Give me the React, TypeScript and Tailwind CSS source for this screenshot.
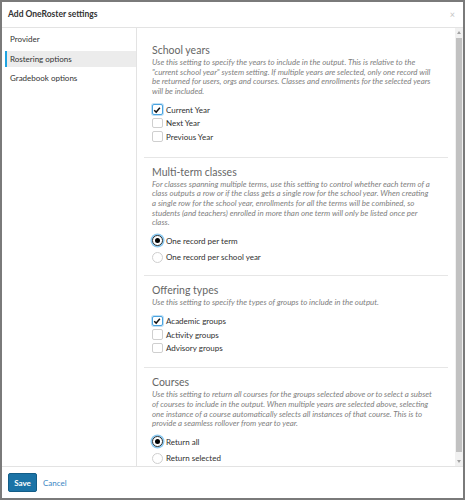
import React from "react";

type Choice = { label: string; on?: boolean };

const Checkbox = ({ on }: { on?: boolean }) => (
  <span
    className={
      on
        ? "flex h-[10.5px] w-[10.5px] items-center justify-center rounded-[2px] border border-[#4aa3df] bg-white shadow-[0_0_0_1px_#bfe0f6]"
        : "h-[10.5px] w-[10.5px] rounded-[2px] border border-[#cfcfcf] bg-white"
    }
  >
    {on && (
      <svg viewBox="0 0 10 10" className="h-[8px] w-[8px]">
        <path d="M1.5 5.2 L4 7.6 L8.6 2.2" fill="none" stroke="#111" strokeWidth="1.8" />
      </svg>
    )}
  </span>
);

const Radio = ({ on }: { on?: boolean }) => (
  <span
    className={
      on
        ? "flex h-[11px] w-[11px] items-center justify-center rounded-full border border-[#333] bg-white shadow-[0_0_0_1.5px_#8cc8ee]"
        : "h-[11px] w-[11px] rounded-full border border-[#cfcfcf] bg-white"
    }
  >
    {on && <span className="h-[5.5px] w-[5.5px] rounded-full bg-black" />}
  </span>
);

// description lines are kept as in the original dialog so wrapping matches
const Section = ({
  title,
  lines,
  children,
  last,
  pb,
}: {
  title: string;
  lines: string[];
  children: React.ReactNode;
  last?: boolean;
  pb: string;
}) => (
  <div className={`pl-[8px] pr-[10px] pt-[6px] ${pb} ${last ? "" : "border-b border-[#e6e6e6]"}`}>
    <h3 className="h-[16px] text-[10.5px] leading-[16px] text-[#666]">{title}</h3>
    <p className="text-[7.9px] italic leading-[9.6px] text-[#808080]">
      {lines.map((l) => (
        <span key={l} className="block whitespace-nowrap">
          {l}
        </span>
      ))}
    </p>
    {children}
  </div>
);

const CheckList = ({ items }: { items: Choice[] }) => (
  <div className="mt-[6.5px] flex flex-col">
    {items.map((c) => (
      <label key={c.label} className="flex h-[13.5px] items-center gap-[3.5px] text-[8px] text-[#2f2f2f]">
        <Checkbox on={c.on} />
        {c.label}
      </label>
    ))}
  </div>
);

const RadioList = ({ items }: { items: Choice[] }) => (
  <div className="mt-[4.5px] flex flex-col">
    {items.map((c) => (
      <label key={c.label} className="flex h-[16.5px] items-center gap-[3px] text-[8px] text-[#2f2f2f]">
        <Radio on={c.on} />
        {c.label}
      </label>
    ))}
  </div>
);

const App = () => {
  const nav = ["Provider", "Rostering options", "Gradebook options"];

  return (
    <div className="flex h-[500px] w-[465px] flex-col border-2 border-[#7a7a7a] bg-white font-['Lato',sans-serif]">
      <div className="flex h-[26px] shrink-0 items-center justify-between border-b border-[#e3e3e3] pl-[6px] pr-[8px]">
        <span className="text-[8.5px] font-bold text-[#333]">Add OneRoster settings</span>
        <span className="text-[9px] text-[#c4c4c4]">×</span>
      </div>

      <div className="flex min-h-0 flex-1">
        <div className="flex w-[135px] shrink-0 flex-col gap-[3.5px] border-r border-[#e3e3e3] pl-[3px] pt-[3px]">
          {nav.map((n) => (
            <div
              key={n}
              className={`flex h-[16px] items-center border-l-2 pl-[3px] text-[8px] ${
                n === "Rostering options" ? "border-[#1fa3e0] bg-[#ececec] text-[#333]" : "border-transparent text-[#333]"
              }`}
            >
              {n}
            </div>
          ))}
        </div>

        <div className="flex min-w-0 flex-1">
          <div className="min-w-0 flex-1 overflow-hidden px-[7px] pt-[8px]">
            <Section
              title="School years"
              pb="pb-[13.5px]"
              lines={[
                "Use this setting to specify the years to include in the output. This is relative to the",
                '"current school year" system setting. If multiple years are selected, only one record will',
                "be returned for users, orgs and courses. Classes and enrollments for the selected years",
                "will be included.",
              ]}
            >
              <CheckList items={[{ label: "Current Year", on: true }, { label: "Next Year" }, { label: "Previous Year" }]} />
            </Section>
            <Section
              title="Multi-term classes"
              pb="pb-[10px]"
              lines={[
                "For classes spanning multiple terms, use this setting to control whether each term of a",
                "class outputs a row or if the class gets a single row for the school year. When creating",
                "a single row for the school year, enrollments for all the terms will be combined, so",
                "students (and teachers) enrolled in more than one term will only be listed once per",
                "class.",
              ]}
            >
              <RadioList items={[{ label: "One record per term", on: true }, { label: "One record per school year" }]} />
            </Section>
            <Section
              title="Offering types"
              pb="pb-[12.5px]"
              lines={["Use this setting to specify the types of groups to include in the output."]}
            >
              <CheckList items={[{ label: "Academic groups", on: true }, { label: "Activity groups" }, { label: "Advisory groups" }]} />
            </Section>
            <Section
              title="Courses"
              pb="pb-[10px]"
              last
              lines={[
                "Use this setting to return all courses for the groups selected above or to select a subset",
                "of courses to include in the output. When multiple years are selected above, selecting",
                "one instance of a course automatically selects all instances of that course. This is to",
                "provide a seamless rollover from year to year.",
              ]}
            >
              <RadioList items={[{ label: "Return all", on: true }, { label: "Return selected" }]} />
            </Section>
          </div>

          <div className="flex w-[8px] shrink-0 flex-col items-center bg-[#f1f1f1]">
            <span className="mt-[3px] h-0 w-0 border-x-[2.5px] border-b-[3px] border-x-transparent border-b-[#a3a3a3]" />
            <div className="mt-[4px] w-[6.5px] flex-1 bg-[#c1c1c1]" />
            <span className="mb-[3px] mt-[8px] h-0 w-0 border-x-[2.5px] border-t-[3px] border-x-transparent border-t-[#a3a3a3]" />
          </div>
        </div>
      </div>

      <div className="flex h-[32px] shrink-0 items-center gap-[6px] border-t border-[#e3e3e3] pl-[6px]">
        <button className="flex h-[19px] w-[29px] items-center justify-center rounded-[2px] border border-[#135d87] bg-[#1b73a6] text-[8px] font-bold text-white">
          Save
        </button>
        <span className="text-[8px] text-[#3a86c4]">Cancel</span>
      </div>
    </div>
  );
};

export default App;
